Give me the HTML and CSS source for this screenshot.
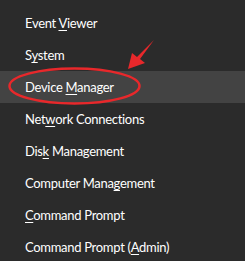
FILE: index.html
```html
<!DOCTYPE html>
<html lang="en">
<head>
    <meta charset="UTF-8">
    <title>Quick Link Menu</title>
    <link rel="stylesheet" href="styles.css">
</head>
<body>

    <div class="menu">
        <ul class="menu-list">
            <li class="menu-item">Event <u>V</u>iewer</li>
            <li class="menu-item">S<u>y</u>stem</li>
            <li class="menu-item active">Device <u>M</u>anager</li>
            <li class="menu-item">Net<u>w</u>ork Connections</li>
            <li class="menu-item">Dis<u>k</u> Management</li>
            <li class="menu-item">Computer Mana<u>g</u>ement</li>
            <li class="menu-item"><u>C</u>ommand Prompt</li>
            <li class="menu-item">Command Prompt (<u>A</u>dmin)</li>
        </ul>

        <!-- red annotation: circle and arrow -->
        <svg class="annotation" width="245" height="261" viewBox="0 0 245 261">
            <ellipse cx="74.5" cy="86" rx="65" ry="17.5" fill="none" stroke="#e8282b" stroke-width="2.5"/>
            <polygon points="154,40 140,59 145,63 128,69 132,53 137,57" fill="#e8282b"/>
        </svg>
    </div>

</body>
</html>
```

FILE: styles.css
```css
body {
    margin: 0;
    background-color: #2b2b2b;
    font-family: 'Lato', 'Noto Sans', sans-serif;
    color: #fff;
}

.menu {
    position: relative;
    width: 245px;
    height: 261px;
    overflow: hidden;
}

.menu-list {
    list-style: none;
    margin: 0;
    padding: 7px 0 0 0;
}

.menu-item {
    height: 32px;
    line-height: 32px;
    padding-left: 25px;
    font-size: 13px;
    letter-spacing: -0.3px;
    white-space: nowrap;
}

.menu-item u {
    text-decoration-thickness: 1px;
    text-underline-offset: 2px;
}

.active {
    background-color: #434343;
}

.annotation {
    position: absolute;
    top: 0;
    left: 0;
}
```
